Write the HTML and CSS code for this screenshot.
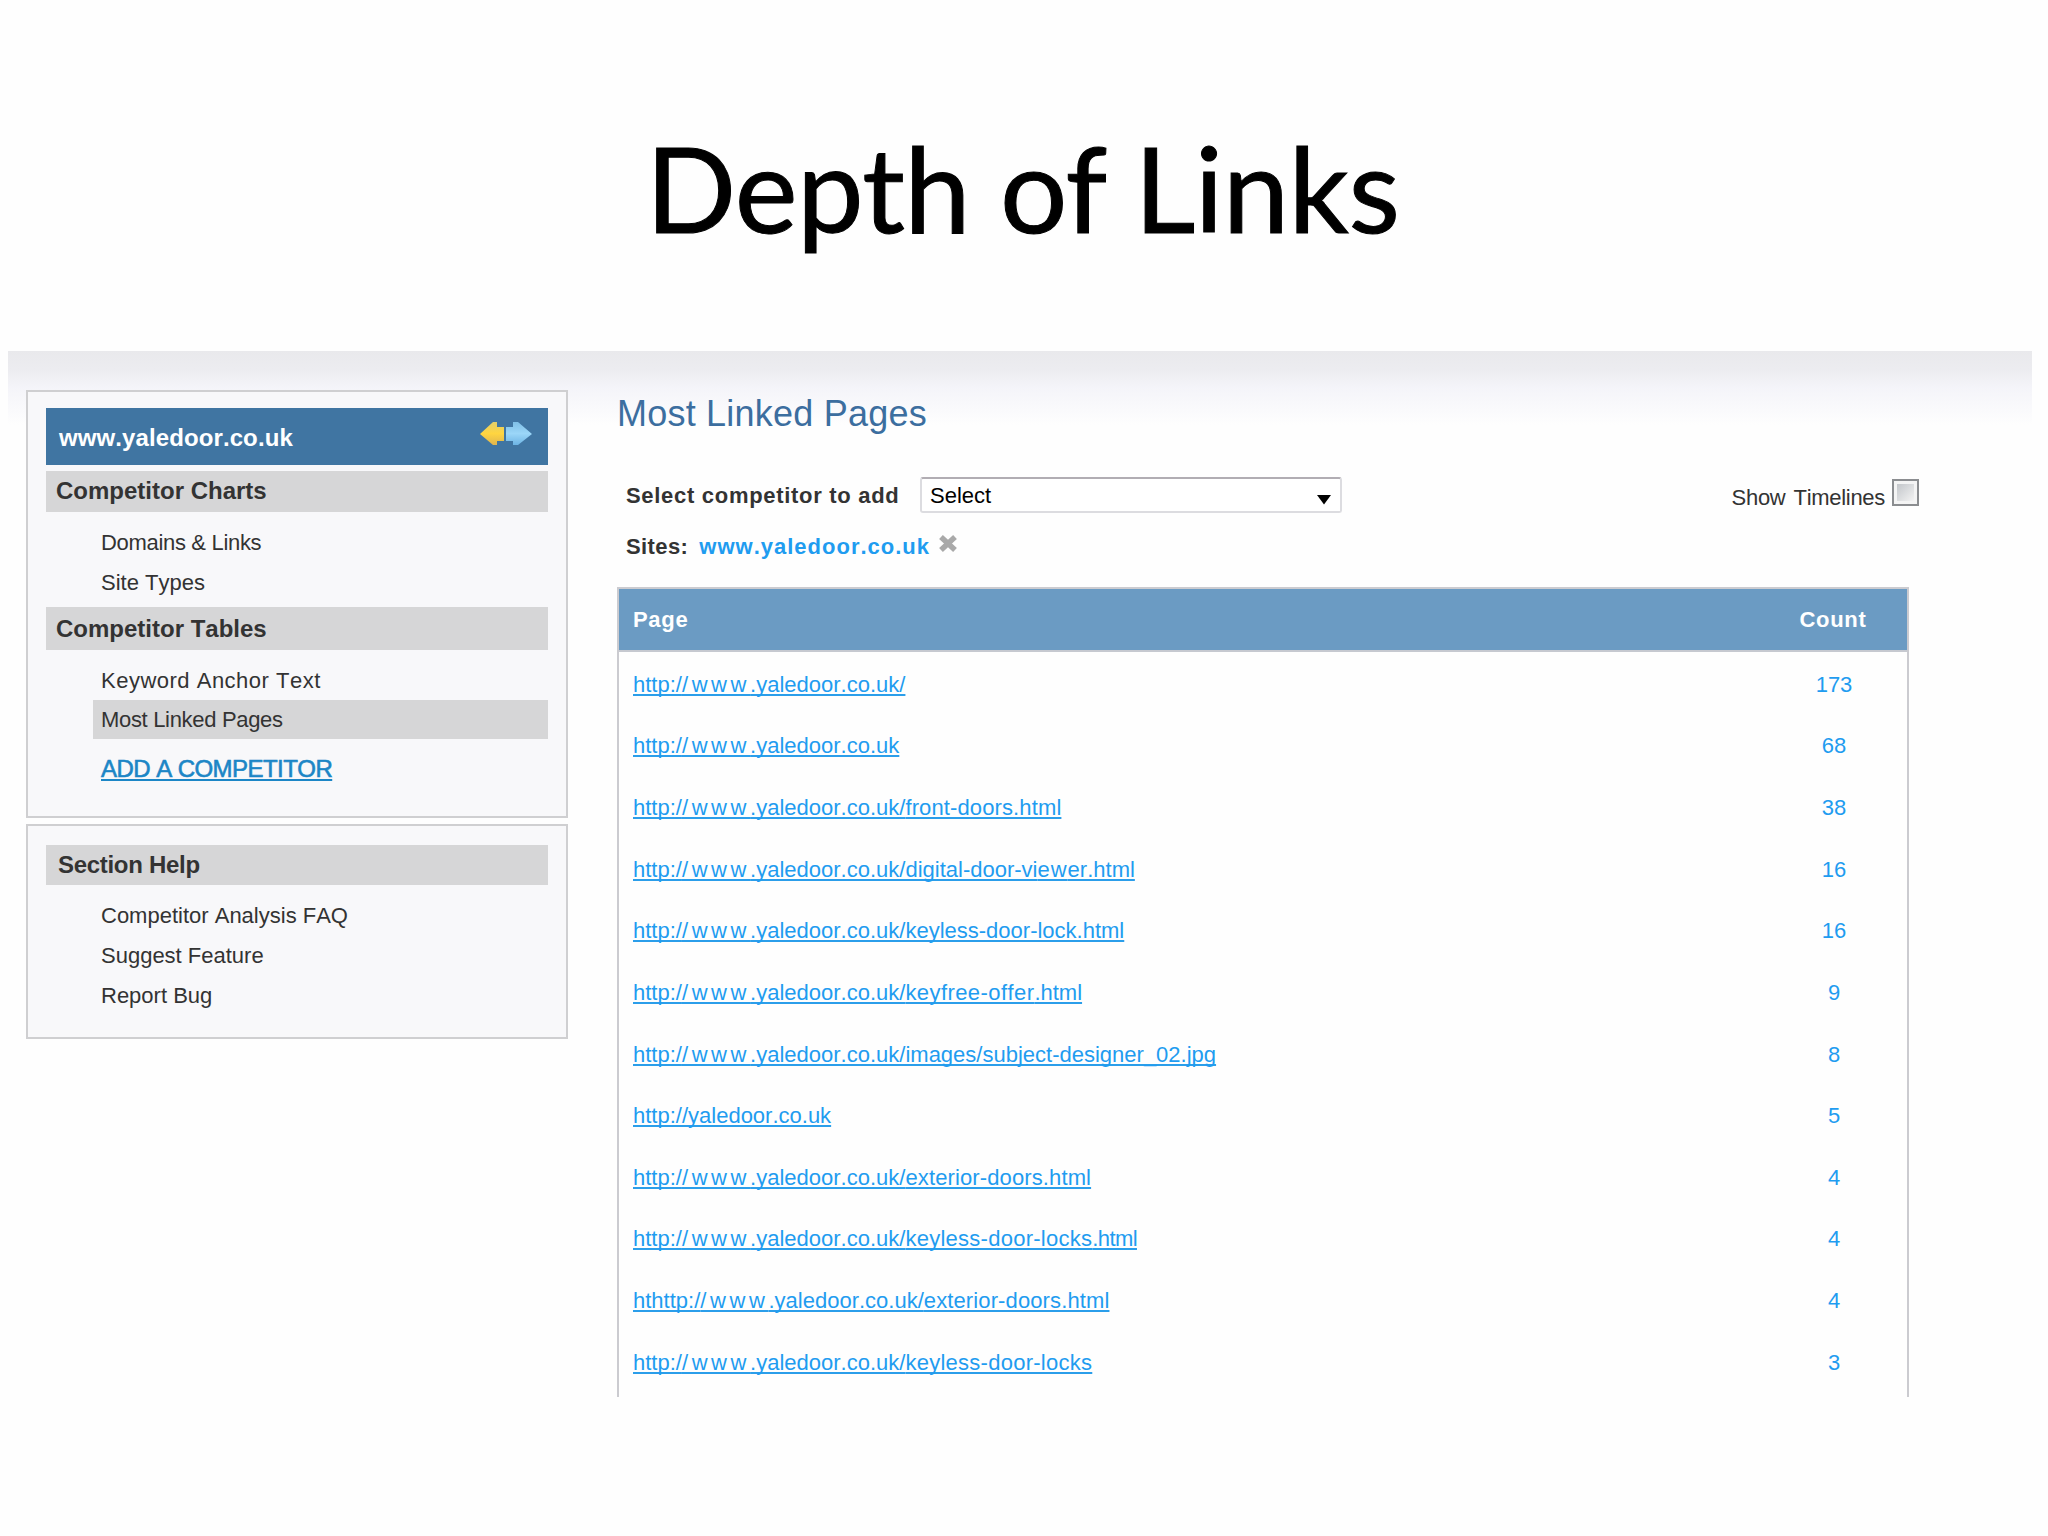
FILE: index.html
```html
<!DOCTYPE html>
<html lang="en">
<head>
<meta charset="utf-8">
<title>Depth of Links</title>
<link rel="stylesheet" href="styles.css">
</head>
<body>
<header class="slide-head"><h1 class="slide-title">Depth of Links</h1></header>
<div class="app">
  <aside class="sidebar">
    <nav class="card card-nav">
      <div class="site-bar"><span>www.yaledoor.co.uk</span>
        <svg class="arrows" width="54" height="28" viewBox="0 0 54 28">
          <defs>
            <linearGradient id="gold" x1="0" y1="0" x2="0" y2="1"><stop offset="0" stop-color="#e3cf6b"/><stop offset=".5" stop-color="#ffd540"/><stop offset="1" stop-color="#dfb550"/></linearGradient>
            <linearGradient id="sky" x1="0" y1="0" x2="0" y2="1"><stop offset="0" stop-color="#7fbfe6"/><stop offset=".5" stop-color="#9bd6f8"/><stop offset="1" stop-color="#6db4e4"/></linearGradient>
          </defs>
          <path d="M1 15 14 3h4v5h7v14h-7v4h-4Z" fill="url(#gold)"/>
          <path d="M53 15 39 3h-5v5h-7v14h7v4h5Z" fill="url(#sky)"/>
        </svg>
      </div>
      <h2 class="group">Competitor Charts</h2>
      <ul class="items">
        <li class="tight">Domains &amp; Links</li>
        <li>Site Types</li>
      </ul>
      <h2 class="group group-tall">Competitor Tables</h2>
      <ul class="items items-tables">
        <li class="loose">Keyword Anchor Text</li>
        <li class="tight current">Most Linked Pages</li>
      </ul>
      <a class="add">ADD A COMPETITOR</a>
    </nav>
    <nav class="card card-help">
      <h2 class="group group-help">Section Help</h2>
      <ul class="items items-help">
        <li>Competitor Analysis FAQ</li>
        <li>Suggest Feature</li>
        <li>Report Bug</li>
      </ul>
    </nav>
  </aside>
  <main class="main">
    <h2 class="page-title">Most Linked Pages</h2>
    <div class="filters">
      <span class="label">Select competitor to add</span>
      <div class="select"><span>Select</span>
        <svg width="16" height="10" viewBox="0 0 16 10"><path d="M1 0h14L8 9.5Z" fill="#000"/></svg>
      </div>
      <span class="timelines">Sho<span class="show-w">w</span> Timelines</span>
      <span class="checkbox"></span>
    </div>
    <div class="sites"><span>Sites:</span><a class="site">www.yaledoor.co.uk</a>
      <svg class="remove" width="20" height="19" viewBox="0 0 20 19"><path d="M3 3 17 16M17 3 3 16" stroke="#a9a9a9" stroke-width="5.5"/></svg>
    </div>
    <div class="table">
      <div class="thead"><span>Page</span><span class="count">Count</span></div>
      <div class="tbody">
        <div class="row"><a>http:/<span class="w">/www</span>.yaledoor.co.uk/</a><span class="count">173</span></div>
        <div class="row"><a>http:/<span class="w">/www</span>.yaledoor.co.uk</a><span class="count">68</span></div>
        <div class="row"><a>http:/<span class="w">/www</span>.yaledoor.co.uk/<span class="s1">front-doors.html</span></a><span class="count">38</span></div>
        <div class="row"><a>http:/<span class="w">/www</span>.yaledoor.co.uk/digital-door-vi<span class="v">ew</span>er.html</a><span class="count">16</span></div>
        <div class="row"><a>http:/<span class="w">/www</span>.yaledoor.co.uk/keyless-door-lock.html</a><span class="count">16</span></div>
        <div class="row"><a>http:/<span class="w">/www</span>.yaledoor.co.uk/<span class="s4">keyfree-offer</span>.html</a><span class="count">9</span></div>
        <div class="row"><a>http:/<span class="w">/www</span>.yaledoor.co.uk/images/subject-designer_02.jpg</a><span class="count">8</span></div>
        <div class="row"><a>http://yaledoor.co.uk</a><span class="count">5</span></div>
        <div class="row"><a>http:/<span class="w">/www</span>.yaledoor.co.uk/<span class="s1">exterior-doors.html</span></a><span class="count">4</span></div>
        <div class="row"><a>http:/<span class="w">/www</span>.yaledoor.co.uk/<span class="s2">keyless-door-locks</span><span class="n">.html</span></a><span class="count">4</span></div>
        <div class="row"><a>hthttp:/<span class="w">/www</span>.yaledoor.co.uk/<span class="s1">exterior-doors.html</span></a><span class="count">4</span></div>
        <div class="row"><a>http:/<span class="w">/www</span>.yaledoor.co.uk/<span class="s2">keyless-door-locks</span></a><span class="count">3</span></div>
      </div>
    </div>
  </main>
</div>
</body>
</html>
```
FILE: styles.css
```css
* { box-sizing: border-box; margin: 0; padding: 0; }
body {
  width: 2048px; height: 1536px; overflow: hidden;
  background: #fefefe; color: #333;
  font: 22px/30px "Liberation Sans", Arial, sans-serif;
  font-kerning: none;
}
ul { list-style: none; }
.slide-head { height: 351px; padding-top: 116px; text-align: center; }
.slide-title {
  font: 400 119px/143px Lato, "Gill Sans", sans-serif;
  color: #000; letter-spacing: -.6px; white-space: nowrap;
  margin-left: -3px;
  -webkit-text-stroke: 1px #000;
}
.app {
  display: flex; align-items: flex-start; gap: 49px;
  width: 2024px; height: 1050px; margin-left: 8px; padding-left: 18px;
  background: linear-gradient(#e9e9ec 0, #ececf0 18px, #f4f4f9 36px, #fefefe 74px) no-repeat;
}

.sidebar { display: flex; flex-direction: column; gap: 6px; width: 542px; margin-top: 39px; }
.card { border: 2px solid #cfcfd1; background: #f8f8fa; }
.card-nav { height: 428px; padding: 16px 18px 0; }
.card-help { height: 215px; padding: 19px 18px 0; }
.site-bar {
  display: flex; justify-content: space-between;
  height: 57px; margin-bottom: 6px; padding: 15px 15px 0 13px;
  background: #4075a2; color: #fff; font-size: 24px; font-weight: bold; letter-spacing: .1px;
}
.arrows { margin-top: -4px; }
.group { height: 41px; padding: 5px 10px 0; background: #d6d6d7; font-size: 24px; line-height: 30px; }
.group-tall { height: 43px; margin-top: 9px; padding-top: 7px; }
.group-help { height: 40px; padding-left: 12px; letter-spacing: -.3px; }
.items { display: flex; flex-direction: column; gap: 10px; margin: 16px 0 0 47px; }
.items li { padding-left: 8px; }
.items-tables { gap: 4px; }
.items-help { gap: 10px; margin-top: 16px; }
.tight { letter-spacing: -.32px; }
.loose { letter-spacing: .5px; }
.items .current { height: 39px; padding-top: 5px; background: #d6d6d7; }
.add {
  display: inline-block; margin: 15px 0 0 55px;
  color: #1c86c6; font-size: 24px; letter-spacing: -.55px;
  -webkit-text-stroke: .6px #1c86c6;
  text-decoration: underline 2px; text-underline-offset: 2px;
}

.main { width: 1302px; }
.page-title { margin-top: 43px; padding-left: 0; color: #3c6e9f; font-size: 36px; font-weight: normal; line-height: 40px; letter-spacing: .22px; }
.filters { display: flex; height: 36px; margin-top: 43px; padding-left: 9px; line-height: 38px; white-space: nowrap; }
.label { width: 294px; font-weight: bold; letter-spacing: .7px; }
.select {
  display: flex; justify-content: space-between; align-items: center;
  width: 422px; height: 36px; padding: 0 8px; background: #fff; color: #000; line-height: 35px;
  border: 2px solid #dcdce0; border-top-color: #b1adb3; border-radius: 3px;
}
.select svg { margin-top: 9px; }
.timelines { margin-left: auto; padding-right: 7px; line-height: 42px; letter-spacing: -.3px; }
.show-w { letter-spacing: 2px; }
.checkbox {
  width: 27px; height: 27px; margin: 2px 0 0; border: 2px solid #8b8d90;
  background: linear-gradient(135deg, #c3c6ca, #f3f3f3) content-box, #f4f4f4;
  padding: 3px;
}
.sites { display: flex; height: 30px; margin-top: 19px; padding-left: 9px; font-weight: bold; letter-spacing: .4px; }
.site { margin-left: 11px; color: #1f9cf0; letter-spacing: 1px; }
.remove { margin: 2px 0 0 8px; }

.table { width: 1292px; height: 810px; margin-top: 25px; border: 2px solid #cbcbd0; border-bottom: 0; }
.thead {
  display: flex; justify-content: space-between; height: 63px; padding-left: 14px;
  background: #6b9bc3; border-bottom: 2px solid #c6c9d0;
  color: #fff; font-weight: bold; line-height: 61px; letter-spacing: .7px;
}
.thead .count { padding-right: 2px; }
.count { width: 146px; text-align: center; }
.tbody { display: grid; grid-auto-rows: 61.64px; padding-top: 1.75px; }
.row { display: flex; justify-content: space-between; padding-left: 14px; color: #1f9cf0; line-height: 61px; white-space: nowrap; }
.row a { text-decoration: underline 2px #2b9eea; text-underline-offset: 2px; text-decoration-skip-ink: none; }
.w { letter-spacing: 3.6px; }
.v { letter-spacing: 1px; }
.s1 { letter-spacing: .12px; }
.s2 { letter-spacing: .26px; }
.s4 { letter-spacing: .42px; }
.n { letter-spacing: -.6px; }
```
